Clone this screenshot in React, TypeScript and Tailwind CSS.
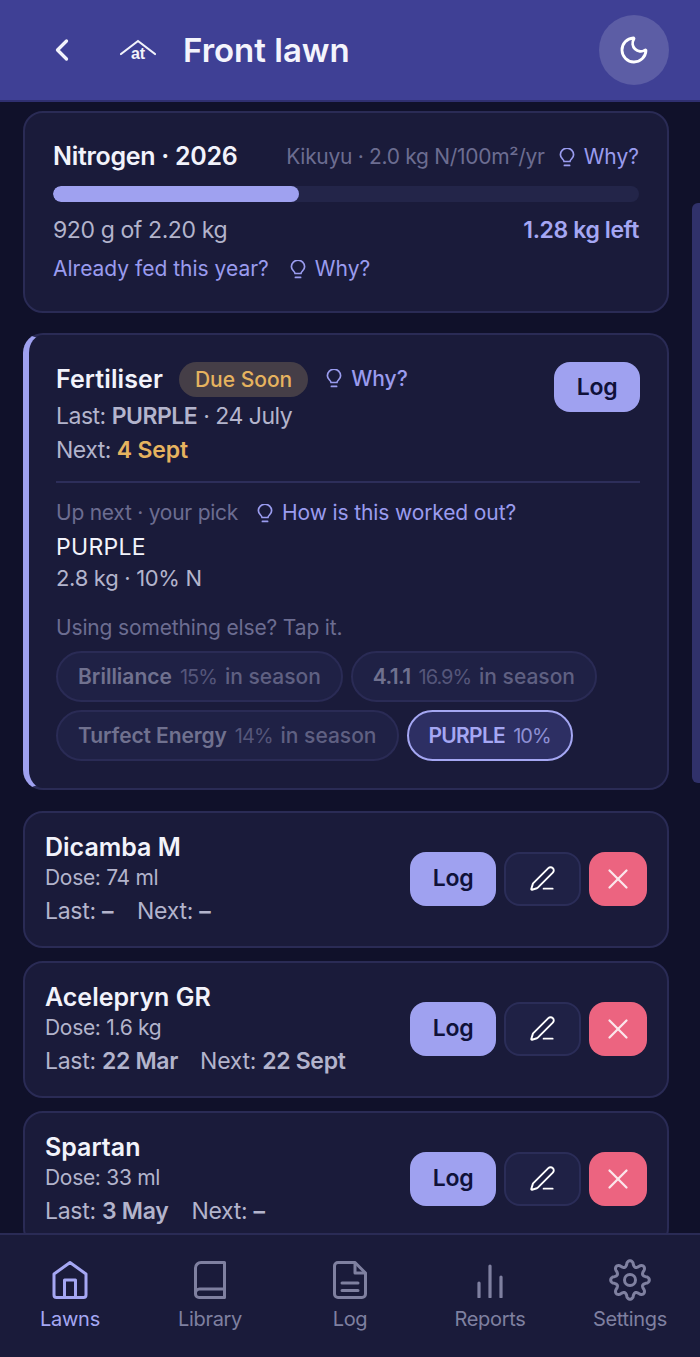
import { ChevronLeft, Moon, PenLine, X } from "lucide-react";

const font = "font-['Inter','Noto_Sans',sans-serif]";

function Bulb() {
  return (
    <svg width="16" height="19" viewBox="0 0 16 19" fill="none" stroke="currentColor" strokeWidth="1.7" strokeLinecap="round" strokeLinejoin="round">
      <path d="M5 13.5C5 11.3 1.4 10.4 1.4 6.8a6.6 6.6 0 0 1 13.2 0c0 3.6-3.6 4.5-3.6 6.7z" />
      <path d="M5.4 17.4h5.2" />
    </svg>
  );
}

function Why({ label = "Why?" }: { label?: string }) {
  return (
    <span className="inline-flex items-center gap-[9px] text-[#9a9cef]">
      <Bulb />
      <span>{label}</span>
    </span>
  );
}

function Chip(props: { name: string; pct: string; season?: boolean; active?: boolean; tight?: string }) {
  return (
    <div
      className={
        props.active
          ? "flex h-[51px] items-center gap-[8px] rounded-full border-2 border-[#a5a7f3] bg-[#2d2f63] px-[20px] text-[21px]"
          : "flex h-[51px] items-center gap-[8px] rounded-full border-2 border-[#2a2b55] bg-[#1f2145] px-[20px] text-[21px]"
      }
    >
      <span className={`${props.tight ?? ""} ${props.active ? "font-semibold text-[#a5a7f3]" : "font-semibold text-[#70718f]"}`}>{props.name}</span>
      <span className={props.active ? "text-[20px] tracking-[-1px] text-[#8e90d4]" : "text-[20px] tracking-[-1px] text-[#55567a]"}>
        {props.pct}
      </span>
      {props.season && <span className="font-medium text-[#5f6082]">in season</span>}
    </div>
  );
}

function Treatment(props: { name: string; dose: string; last: string; next: string; gap: string }) {
  return (
    <div className="flex h-[137px] shrink-0 items-center justify-between rounded-[20px] border-2 border-[#2a2b55] bg-[#1a1b3a] pl-[20px] pr-[20px]">
      <div className="mt-[1px] flex flex-col text-[#b3b4cc]">
        <div className="text-[25px] leading-[32px] font-semibold text-[#f2f3fb]">{props.name}</div>
        <div className="text-[21px] leading-[30px] tracking-[-0.3px]">Dose: {props.dose}</div>
        <div className="flex text-[23px] leading-[36px] tracking-[-0.3px]">
          <span>
            Last: <b className="font-semibold">{props.last}</b>
          </span>
          <span className={props.gap}>
            Next: <b className="font-semibold">{props.next}</b>
          </span>
        </div>
      </div>
      <div className="mb-[2px] flex items-center gap-[8px]">
        <div className="flex h-[54px] w-[86px] items-center justify-center rounded-[16px] bg-[#9fa1f0] text-[23px] font-semibold tracking-[-0.3px] text-[#10113a]">
          Log
        </div>
        <div className="flex h-[54px] w-[77px] items-center justify-center rounded-[16px] border-2 border-[#2b2d58] bg-[#1f2145] text-white">
          <PenLine size={27} strokeWidth={1.7} />
        </div>
        <div className="flex h-[54px] w-[58px] items-center justify-center rounded-[16px] bg-[#ec6480] text-[#fbe7ec]">
          <X size={34} strokeWidth={1.6} />
        </div>
      </div>
    </div>
  );
}

function HomeIcon() {
  return (
    <svg width="38" height="40" viewBox="0 0 38 40" fill="none" stroke="currentColor" strokeWidth="3" strokeLinejoin="round">
      <path d="M3 14 19 2.5 35 14v21a2.5 2.5 0 0 1-2.5 2.5h-27A2.5 2.5 0 0 1 3 35z" />
      <path d="M13.5 37V20h11v17" />
    </svg>
  );
}

function BookIcon() {
  return (
    <svg width="34" height="40" viewBox="0 0 34 40" fill="none" stroke="currentColor" strokeWidth="3" strokeLinejoin="round">
      <path d="M31.5 2.5H8A5.5 5.5 0 0 0 2.5 8v26A3.5 3.5 0 0 0 6 37.5h25.5z" />
      <path d="M2.5 33A4 4 0 0 1 6.5 29h25" />
    </svg>
  );
}

function LogIcon() {
  return (
    <svg width="36" height="40" viewBox="0 0 36 40" fill="none" stroke="currentColor" strokeWidth="3" strokeLinejoin="round" strokeLinecap="round">
      <path d="M23 2.5H6A3.5 3.5 0 0 0 2.5 6v28A3.5 3.5 0 0 0 6 37.5h24a3.5 3.5 0 0 0 3.5-3.5V13z" />
      <path d="M23 3v10h10" />
      <path d="M10 23h16M10 30.5h16" />
    </svg>
  );
}

function ReportsIcon() {
  return (
    <svg width="28" height="36" viewBox="0 0 28 36" fill="none" stroke="currentColor" strokeWidth="3.2" strokeLinecap="round">
      <path d="M3 21v14M14 4v31M25 15v20" />
    </svg>
  );
}

// eight rounded teeth, a wave around the centre
function gearPath() {
  const points: string[] = [];
  for (let i = 0; i < 240; i++) {
    const t = (i / 240) * Math.PI * 2;
    const c = Math.cos(8 * t);
    const wave = Math.sign(c) * Math.pow(Math.abs(c), 0.7);
    const r = 16.5 + 2.8 * wave;
    points.push(`${(22 + r * Math.cos(t)).toFixed(2)} ${(22 + r * Math.sin(t)).toFixed(2)}`);
  }
  return `M${points.join("L")}Z`;
}

function GearIcon() {
  return (
    <svg width="44" height="44" viewBox="0 0 44 44" fill="none" stroke="currentColor" strokeWidth="3" strokeLinejoin="round">
      <path d={gearPath()} />
      <circle cx="22" cy="22" r="5.5" />
    </svg>
  );
}

function NavItem(props: { label: string; active?: boolean; icon: React.ReactNode }) {
  return (
    <div className={props.active ? "flex w-[140px] flex-col items-center text-[#a5a7f3]" : "flex w-[140px] flex-col items-center text-[#7f80a0]"}>
      <div className="flex h-[44px] items-center justify-center">{props.icon}</div>
      <div className="mt-[3px] text-[20px] leading-[28px] tracking-[-0.3px]">{props.label}</div>
    </div>
  );
}

export default function App() {
  return (
    <div className={`${font} relative flex h-[1357px] w-[700px] flex-col overflow-hidden bg-[#10112a]`}>
      <header className="flex h-[102px] shrink-0 items-center border-b-2 border-[#2f2f70] bg-[#3f4095] pl-[44px] pr-[31px] text-white">
        <ChevronLeft size={36} strokeWidth={2.2} className="text-[#f2f3fb]" />
        <svg width="36" height="22" viewBox="0 0 36 22" className="ml-[40px]" fill="none">
          <path d="M1 15 18 2l17 13" stroke="#f2f3fb" strokeWidth="2.2" strokeLinecap="round" strokeLinejoin="round" />
          <text x="18" y="20" textAnchor="middle" fontSize="16" fontWeight="700" fill="#f2f3fb" fontFamily="Liberation Sans">
            at
          </text>
        </svg>
        <h1 className="ml-[27px] pt-[2px] text-[33px] font-semibold text-[#f4f4fc]">Front lawn</h1>
        <div className="ml-auto flex h-[70px] w-[70px] items-center justify-center rounded-full bg-[#5c5da5]">
          <Moon size={32} strokeWidth={2.1} />
        </div>
      </header>

      <main className="flex flex-1 flex-col overflow-hidden pl-[23px] pr-[31px] pt-[9px]">
        <section className="flex h-[202px] shrink-0 flex-col rounded-[20px] border-2 border-[#2a2b55] bg-[#1a1b3a] pl-[28px] pr-[28px] pt-[25px]">
          <div className="flex items-center justify-between">
            <span className="text-[25px] font-semibold leading-[36px] tracking-[-0.3px] text-[#f2f3fb]">Nitrogen · 2026</span>
            <span className="flex items-center gap-[14px] pt-[2px] text-[21px] text-[#6c6d91]">
              <span className="tracking-[-0.3px]">Kikuyu · 2.0 kg N/100m²/yr</span>
              <Why />
            </span>
          </div>
          <div className="mt-[12px] h-[16px] overflow-hidden rounded-full bg-[#232549]">
            <div className="h-full w-[42%] rounded-full bg-[#9fa1f0]" />
          </div>
          <div className="mt-[10px] flex items-center justify-between text-[23px] leading-[36px] tracking-[-0.4px]">
            <span className="text-[#b3b4cc]">920 g of 2.20 kg</span>
            <span className="font-semibold text-[#a5a7f3]">1.28 kg left</span>
          </div>
          <div className="mt-[3px] flex items-center gap-[21px] text-[21px] leading-[36px] text-[#9a9cef]">
            <span>Already fed this year?</span>
            <Why />
          </div>
        </section>

        <section className="mt-[20px] flex h-[457px] shrink-0 flex-col rounded-[20px] border-2 border-l-[6px] border-[#2a2b55] border-l-[#9fa1f0] bg-[#1a1b3a] pl-[27px] pr-[27px] pt-[26px]">
          <div className="flex justify-between">
            <div className="flex flex-col text-[23px] tracking-[-0.5px] text-[#b3b4cc]">
              <div className="flex h-[37px] items-center">
                <span className="text-[25px] font-semibold tracking-[0.1px] text-[#f2f3fb]">Fertiliser</span>
                <span className="ml-[16px] flex h-[35px] items-center rounded-full bg-[#453e47] px-[16px] text-[21px] font-medium tracking-[0] text-[#e6b35f]">
                  Due Soon
                </span>
                <span className="ml-[18px] text-[21px] font-medium tracking-[0]">
                  <Why />
                </span>
              </div>
              <div className="mt-[1px] leading-[34px]">
                Last: <b className="font-semibold">PURPLE</b> · 24 July
              </div>
              <div className="leading-[34px]">
                Next: <b className="font-semibold tracking-[-0.2px] text-[#e6b35f]">4 Sept</b>
              </div>
            </div>
            <div className="mt-[1px] flex h-[50px] w-[86px] items-center justify-center rounded-[16px] bg-[#9fa1f0] text-[23px] font-semibold tracking-[-0.3px] text-[#10113a]">
              Log
            </div>
          </div>
          <div className="mt-[14px] h-[2px] bg-[#2d2e5a]" />
          <div className="mt-[12px] flex items-center gap-[19px] text-[21px] leading-[36px] tracking-[-0.12px] text-[#6c6d91]">
            <span className="tracking-[-0.25px]">Up next · your pick</span>
            <Why label="How is this worked out?" />
          </div>
          <div className="text-[23px] leading-[32px] tracking-[0.3px] text-[#f2f3fb]">PURPLE</div>
          <div className="text-[22px] leading-[30px] tracking-[-0.3px] text-[#b3b4cc]">2.8 kg · 10% N</div>
          <div className="mt-[17px] text-[21px] leading-[36px] tracking-[-0.15px] text-[#6c6d91]">Using something else? Tap it.</div>
          <div className="mt-[5px] flex flex-wrap gap-x-[8px] gap-y-[8px]">
            <Chip name="Brilliance" pct="15%" season />
            <Chip name="4.1.1" pct="16.9%" season tight="tracking-[-0.6px]" />
            <Chip name="Turfect Energy" pct="14%" season tight="tracking-[-0.1px]" />
            <Chip name="PURPLE" pct="10%" active tight="tracking-[-0.7px]" />
          </div>
        </section>

        <div className="mt-[21px] flex flex-col gap-[13px]">
          <Treatment name="Dicamba M" dose="74 ml" last="–" next="–" gap="ml-[24px]" />
          <Treatment name="Acelepryn GR" dose="1.6 kg" last="22 Mar" next="22 Sept" gap="ml-[22px]" />
          <Treatment name="Spartan" dose="33 ml" last="3 May" next="–" gap="ml-[23px]" />
        </div>
      </main>

      <div className="absolute right-0 top-[203px] h-[580px] w-[8px] rounded-l-[6px] bg-[#30316a]" />

      <nav className="flex h-[124px] shrink-0 items-start justify-between border-t-2 border-[#2a2b55] bg-[#1a1b3a] pt-[23px]">
        <NavItem label="Lawns" active icon={<HomeIcon />} />
        <NavItem label="Library" icon={<BookIcon />} />
        <NavItem label="Log" icon={<LogIcon />} />
        <NavItem label="Reports" icon={<ReportsIcon />} />
        <NavItem label="Settings" icon={<GearIcon />} />
      </nav>
    </div>
  );
}
